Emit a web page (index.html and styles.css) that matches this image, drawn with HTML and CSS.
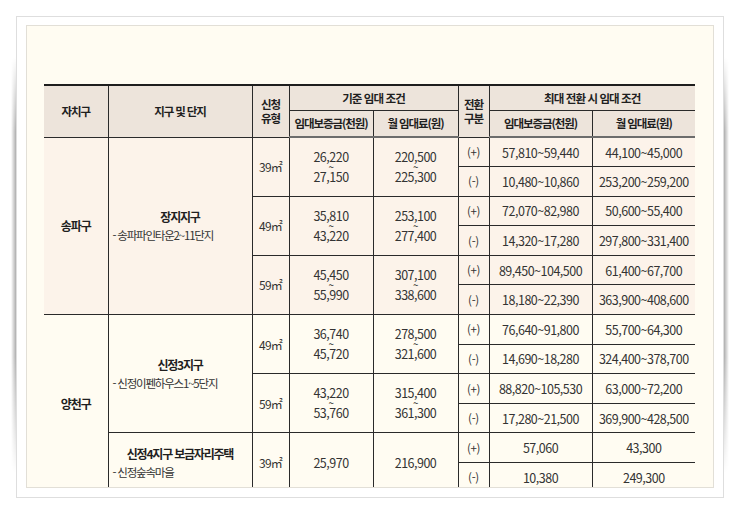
FILE: index.html
```html
<!DOCTYPE html>
<html lang="ko">
<head>
<meta charset="utf-8">
<link rel="stylesheet" href="styles.css">
</head>
<body>
<div class="frame">
  <div class="inner">
    <table class="rent">
      <colgroup>
        <col style="width:64px"><col style="width:144px"><col style="width:37px"><col style="width:84px"><col style="width:85px"><col style="width:31px"><col style="width:103px"><col style="width:103px">
      </colgroup>
      <thead>
        <tr class="h1">
          <th rowspan="2">자치구</th>
          <th rowspan="2">지구 및 단지</th>
          <th rowspan="2" class="two">신청<br>유형</th>
          <th colspan="2">기준 임대 조건</th>
          <th rowspan="2" class="two">전환<br>구분</th>
          <th colspan="2">최대 전환 시 임대 조건</th>
        </tr>
        <tr class="h2">
          <th>임대보증금(천원)</th>
          <th>월 임대료(원)</th>
          <th>임대보증금(천원)</th>
          <th>월 임대료(원)</th>
        </tr>
      </thead>
      <tbody class="songpa">
        <tr>
          <td rowspan="6" class="gu">송파구</td>
          <td rowspan="6" class="site"><div class="sname">장지지구</div><div class="ssub">- 송파파인타운2~11단지</div></td>
          <td rowspan="2" class="area">39㎡</td>
          <td rowspan="2" class="num"><div class="rng"><span>26,220</span><span class="til">~</span><span>27,150</span></div></td>
          <td rowspan="2" class="num"><div class="rng"><span>220,500</span><span class="til">~</span><span>225,300</span></div></td>
          <td class="pm">(+)</td><td class="num">57,810~59,440</td><td class="num">44,100~45,000</td>
        </tr>
        <tr><td class="pm">(-)</td><td class="num">10,480~10,860</td><td class="num">253,200~259,200</td></tr>
        <tr>
          <td rowspan="2" class="area">49㎡</td>
          <td rowspan="2" class="num"><div class="rng"><span>35,810</span><span class="til">~</span><span>43,220</span></div></td>
          <td rowspan="2" class="num"><div class="rng"><span>253,100</span><span class="til">~</span><span>277,400</span></div></td>
          <td class="pm">(+)</td><td class="num">72,070~82,980</td><td class="num">50,600~55,400</td>
        </tr>
        <tr><td class="pm">(-)</td><td class="num">14,320~17,280</td><td class="num">297,800~331,400</td></tr>
        <tr>
          <td rowspan="2" class="area">59㎡</td>
          <td rowspan="2" class="num"><div class="rng"><span>45,450</span><span class="til">~</span><span>55,990</span></div></td>
          <td rowspan="2" class="num"><div class="rng"><span>307,100</span><span class="til">~</span><span>338,600</span></div></td>
          <td class="pm">(+)</td><td class="num">89,450~104,500</td><td class="num">61,400~67,700</td>
        </tr>
        <tr><td class="pm">(-)</td><td class="num">18,180~22,390</td><td class="num">363,900~408,600</td></tr>
      </tbody>
      <tbody class="yangcheon">
        <tr>
          <td rowspan="6" class="gu">양천구</td>
          <td rowspan="4" class="site"><div class="sname">신정3지구</div><div class="ssub">- 신정이펜하우스1~5단지</div></td>
          <td rowspan="2" class="area">49㎡</td>
          <td rowspan="2" class="num"><div class="rng"><span>36,740</span><span class="til">~</span><span>45,720</span></div></td>
          <td rowspan="2" class="num"><div class="rng"><span>278,500</span><span class="til">~</span><span>321,600</span></div></td>
          <td class="pm">(+)</td><td class="num">76,640~91,800</td><td class="num">55,700~64,300</td>
        </tr>
        <tr><td class="pm">(-)</td><td class="num">14,690~18,280</td><td class="num">324,400~378,700</td></tr>
        <tr>
          <td rowspan="2" class="area">59㎡</td>
          <td rowspan="2" class="num"><div class="rng"><span>43,220</span><span class="til">~</span><span>53,760</span></div></td>
          <td rowspan="2" class="num"><div class="rng"><span>315,400</span><span class="til">~</span><span>361,300</span></div></td>
          <td class="pm">(+)</td><td class="num">88,820~105,530</td><td class="num">63,000~72,200</td>
        </tr>
        <tr><td class="pm">(-)</td><td class="num">17,280~21,500</td><td class="num">369,900~428,500</td></tr>
        <tr>
          <td rowspan="2" class="site"><div class="sname">신정4지구 보금자리주택</div><div class="ssub">- 신정숲속마을</div></td>
          <td rowspan="2" class="area">39㎡</td>
          <td rowspan="2" class="num">25,970</td>
          <td rowspan="2" class="num">216,900</td>
          <td class="pm">(+)</td><td class="num">57,060</td><td class="num">43,300</td>
        </tr>
        <tr><td class="pm">(-)</td><td class="num">10,380</td><td class="num">249,300</td></tr>
      </tbody>
    </table>
  </div>
</div>
</body>
</html>
```

FILE: styles.css
```css
html, body {
  margin: 0;
  padding: 0;
  background: #ffffff;
}

body {
  font-family: "Noto Sans CJK KR", "Noto Sans", sans-serif;
  color: #2b2b2b;
}

.frame {
  position: relative;
  box-sizing: border-box;
  width: 708px;
  height: 482px;
  margin: 16px 0 0 16px;
  padding: 8px 9px 9px 9px;
  border: 1px solid #dedede;
  background: #ffffff;
}

.frame::before,
.frame::after {
  content: "";
  position: absolute;
  top: 40px;
  bottom: 24px;
  width: 5px;
  -webkit-mask-image: linear-gradient(to bottom, transparent 0%, #000 18%, #000 72%, transparent 100%);
  mask-image: linear-gradient(to bottom, transparent 0%, #000 18%, #000 72%, transparent 100%);
}

.frame::before {
  left: -6px;
  background: linear-gradient(to right, rgba(0,0,0,0), rgba(0,0,0,0.32));
}

.frame::after {
  right: -6px;
  background: linear-gradient(to left, rgba(0,0,0,0), rgba(0,0,0,0.32));
}

.inner {
  box-sizing: border-box;
  height: 100%;
  border: 1px solid #e2dfd7;
  background: #fffcf2;
  overflow: hidden;
  padding: 58px 0 0 17px;
}

.rent {
  border-collapse: collapse;
  table-layout: fixed;
  width: 651px;
  border-top: 2px solid #1e1e1e;
}

.rent th,
.rent td {
  padding: 0;
  text-align: center;
  vertical-align: middle;
  border: 1px solid #2a2a2a;
}

.rent tr > :first-child {
  border-left: none;
}

.rent tr > :last-child {
  border-right: none;
}

.rent tr > .pm:first-child,
.rent tr > .area:first-child {
  border-left: 1px solid #2a2a2a;
}

.rent thead th {
  background: #ede4db;
  font-weight: 700;
  font-size: 11.5px;
  letter-spacing: -1.1px;
  color: #1f1f1f;
  line-height: 14px;
}

.rent thead th[colspan] {
  letter-spacing: -0.9px;
}

.rent .h1 {
  height: 25px;
}

.rent .h2 {
  height: 27px;
}

.rent .h2 th {
  border-bottom: 2px solid #6c6c6c;
}

.rent tbody tr {
  height: 29.6px;
}

.songpa td {
  background: #fcf3ea;
}

.yangcheon td {
  background: #fffcf2;
}

.gu {
  font-weight: 700;
  font-size: 12px;
  letter-spacing: -1.1px;
  color: #1f1f1f;
}

.site {
  text-align: left;
}

.sname {
  text-align: center;
  font-weight: 700;
  font-size: 12px;
  letter-spacing: -1.2px;
  line-height: 18px;
  color: #1f1f1f;
}

.ssub {
  text-align: left;
  padding-left: 4px;
  font-size: 11.5px;
  letter-spacing: -1.2px;
  line-height: 18px;
  color: #333;
}

.area {
  font-size: 12px;
  letter-spacing: -0.8px;
  color: #333;
}

.num {
  font-size: 12.5px;
  letter-spacing: -0.5px;
  color: #333;
}

.pm {
  font-size: 11.5px;
  letter-spacing: -0.3px;
  color: #333;
}

.rng {
  display: flex;
  flex-direction: column;
  align-items: center;
}

.rng span {
  line-height: 14px;
}

.rng .til {
  font-size: 10px;
  line-height: 6px;
  height: 6px;
  color: #222;
}
```
